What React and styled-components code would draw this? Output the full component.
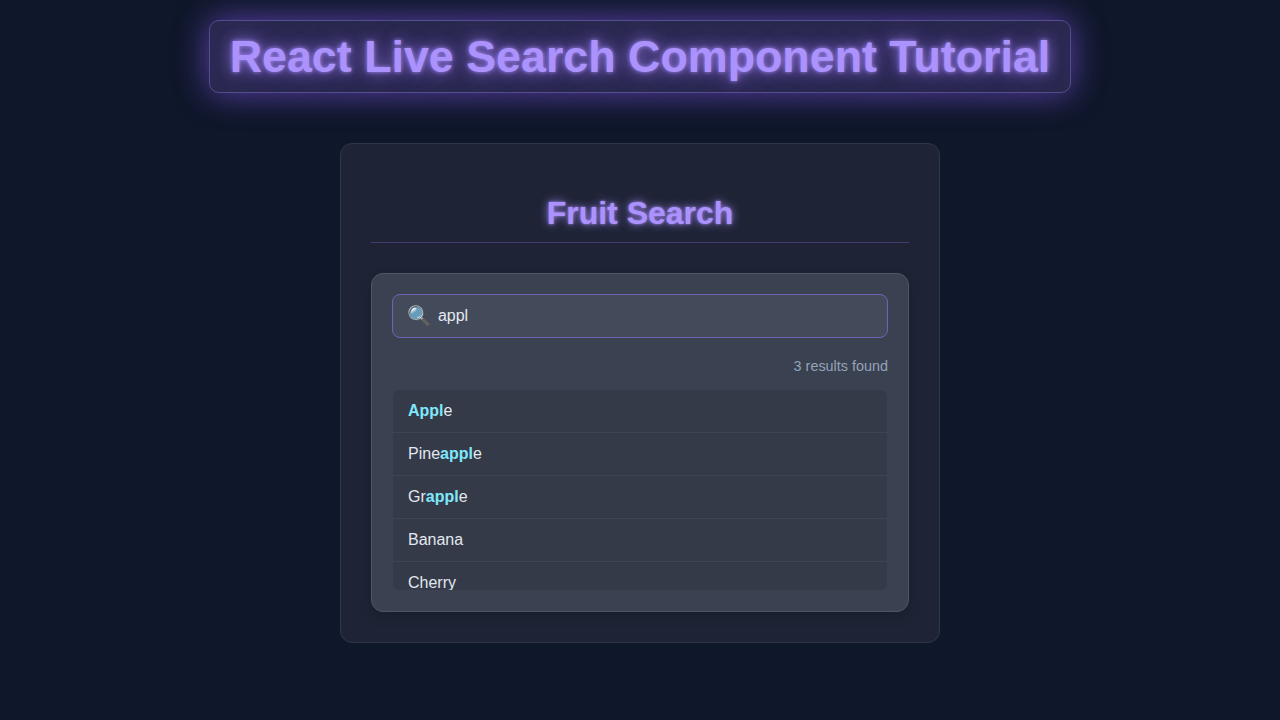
import React from 'react'
import styled, { createGlobalStyle } from 'styled-components'

const GlobalStyle = createGlobalStyle`
  * {
    box-sizing: border-box;
  }
  body {
    margin: 0;
    min-height: 100vh;
    background-color: #0f172a;
    color: #e2e8f0;
    font-family: "Liberation Sans", Arial, sans-serif;
  }
`

const Page = styled.div`
  display: flex;
  flex-direction: column;
  align-items: center;
  height: 720px;
  overflow: hidden;
  padding-top: 20px;
`

const Title = styled.h1`
  margin: 0 0 50px;
  padding: 10px 20px;
  font-size: 44.8px;
  font-weight: 700;
  color: #ab92fc;
  background-color: #2a2950;
  border: 1px solid #544e8c;
  border-radius: 10px;
  text-shadow: 0 0 4px rgba(167, 139, 250, 0.9), 0 0 14px rgba(167, 139, 250, 0.7), 0 0 24px rgba(139, 92, 246, 0.5);
  box-shadow: 0 0 32px rgba(139, 92, 246, 0.65);
`

const Card = styled.div`
  width: 600px;
  height: 500px;
  padding: 30px;
  background-color: #1e2435;
  border: 1px solid #303648;
  border-radius: 12px;
`

const CardTitle = styled.h2`
  margin: 21px 0 30px;
  padding-bottom: 10px;
  font-size: 32px;
  font-weight: 700;
  text-align: center;
  color: #ab92fc;
  text-shadow: 0 0 3px rgba(167, 139, 250, 0.9), 0 0 10px rgba(167, 139, 250, 0.9);
  border-bottom: 1px solid #433c70;
`

const Panel = styled.div`
  padding: 20px;
  background-color: #3a4151;
  border: 1px solid #4e5566;
  border-radius: 12px;
  box-shadow: 0 4px 12px rgba(0, 0, 0, 0.2);
`

const SearchBox = styled.div`
  display: flex;
  align-items: center;
  gap: 6px;
  height: 44px;
  padding: 0 14px;
  background-color: #434a5a;
  border: 1px solid #7360b5;
  border-radius: 8px;
`

const SearchIcon = styled.span`
  font-size: 20px;
  line-height: 1;
  font-family: "Noto Color Emoji", "Liberation Sans", sans-serif;
`

const SearchInput = styled.input`
  flex: 1;
  min-width: 0;
  padding: 0;
  border: none;
  outline: none;
  background: transparent;
  color: #e2e8f0;
  font-family: inherit;
  font-size: 16px;
`

const ResultCount = styled.div`
  margin: 20px 0 15px;
  font-size: 14.4px;
  line-height: 16px;
  text-align: right;
  color: #94a3b8;
`

const List = styled.ul`
  height: 202px;
  margin: 0;
  padding: 0;
  overflow: hidden;
  list-style: none;
  background-color: #343a47;
  border: 1px solid #3a4151;
  border-radius: 8px;
`

const Item = styled.li`
  padding: 12px 15px;
  font-size: 16px;
  line-height: 18px;
  color: #e2e8f0;
  border-bottom: 1px solid #3e4453;
`

const Match = styled.strong`
  font-weight: 700;
  color: #7fe7fb;
`

const fruits = [
  ['', 'Appl', 'e'],
  ['Pine', 'appl', 'e'],
  ['Gr', 'appl', 'e'],
  ['Banana'],
  ['Cherry'],
]

function App() {
  return (
    <Page>
      <GlobalStyle />
      <Title>React Live Search Component Tutorial</Title>
      <Card>
        <CardTitle>Fruit Search</CardTitle>
        <Panel>
          <SearchBox>
            <SearchIcon>🔍</SearchIcon>
            <SearchInput defaultValue="appl" />
          </SearchBox>
          <ResultCount>3 results found</ResultCount>
          <List>
            {fruits.map(([before, match, after]) => (
              <Item key={before + match}>
                {before}
                {match && <Match>{match}</Match>}
                {after}
              </Item>
            ))}
          </List>
        </Panel>
      </Card>
    </Page>
  )
}

export default App
